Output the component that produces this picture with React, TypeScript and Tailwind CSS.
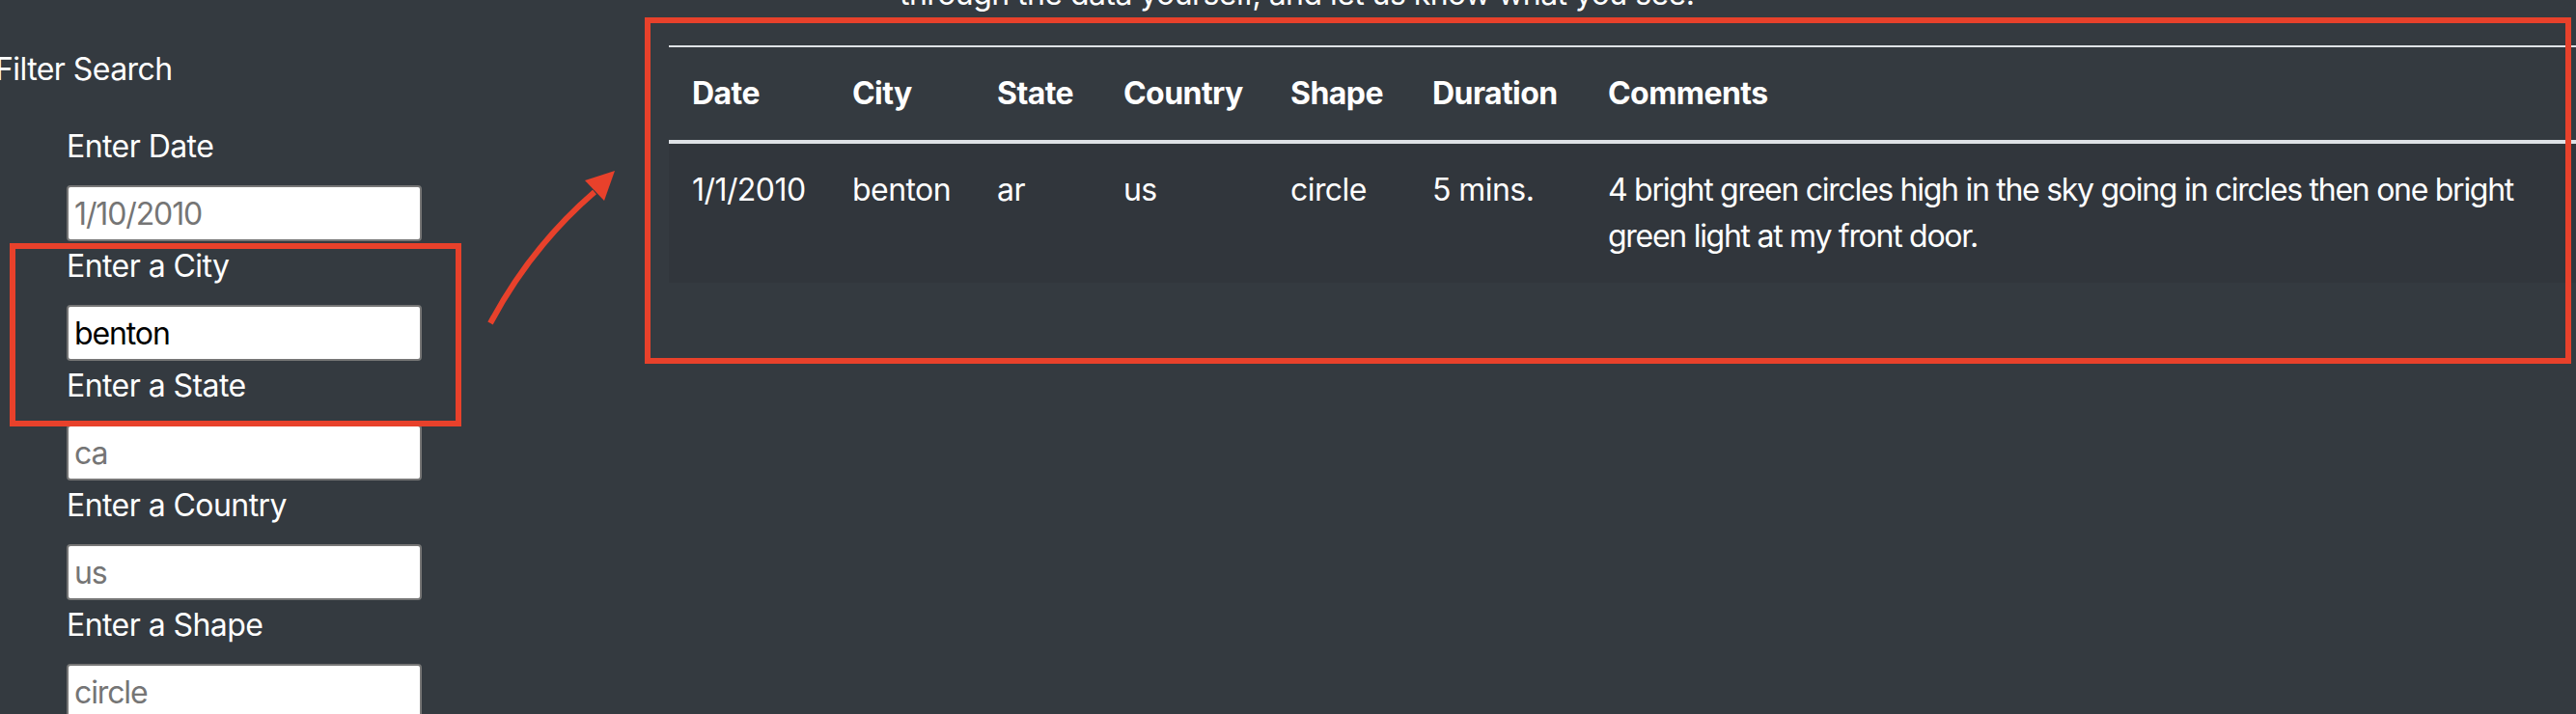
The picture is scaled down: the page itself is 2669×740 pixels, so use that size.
import React from "react";

const groups = [
  { label: "Enter Date", value: "", placeholder: "1/10/2010" },
  { label: "Enter a City", value: "benton", placeholder: "" },
  { label: "Enter a State", value: "", placeholder: "ca" },
  { label: "Enter a Country", value: "", placeholder: "us" },
  { label: "Enter a Shape", value: "", placeholder: "circle" },
];

export default function App() {
  return (
    <div className="relative flex h-[740px] w-[2669px] overflow-hidden bg-[#343a40] font-['Inter',sans-serif] tracking-[-0.035em] text-white">
      <aside className="w-[693px] shrink-0 pt-[48px]">
        <h5 className="-ml-[5px] text-[32px] leading-[48px] font-normal">Filter Search</h5>
        <div className="mt-[32px] flex flex-col pl-[69px]">
          {groups.map((g) => (
            <div key={g.label} className="flex flex-col">
              <label className="mb-[16px] text-[32px] leading-[48px]">{g.label}</label>
              <input
                readOnly
                value={g.value}
                placeholder={g.placeholder}
                className="mb-[2px] h-[58px] w-[368px] rounded-[4px] border-2 border-[#767676] bg-white pl-[6px] font-['Inter',sans-serif] text-[32px] tracking-[-0.035em] text-black outline-none placeholder:text-[#757575]"
              />
            </div>
          ))}
        </div>
      </aside>

      <main className="min-w-0 flex-1">
        <p className="-mt-[30px] whitespace-nowrap pl-[239px] text-[32px] leading-[48px]">
          through the data yourself, and let us know what you see.
        </p>
        <table className="mt-[29px] w-[2000px] table-fixed border-collapse text-left text-[32px] leading-[48px]">
          <thead>
            <tr>
              <th className="w-[166px] border-t-2 border-b-4 border-[#dee2e6] p-[24px] font-bold">Date</th>
              <th className="w-[150px] border-t-2 border-b-4 border-[#dee2e6] p-[24px] font-bold">City</th>
              <th className="w-[131px] border-t-2 border-b-4 border-[#dee2e6] p-[24px] font-bold">State</th>
              <th className="w-[173px] border-t-2 border-b-4 border-[#dee2e6] p-[24px] font-bold">Country</th>
              <th className="w-[147px] border-t-2 border-b-4 border-[#dee2e6] p-[24px] font-bold">Shape</th>
              <th className="w-[182px] border-t-2 border-b-4 border-[#dee2e6] p-[24px] font-bold">Duration</th>
              <th className="border-t-2 border-b-4 border-[#dee2e6] p-[24px] font-bold">Comments</th>
            </tr>
          </thead>
          <tbody>
            <tr className="bg-[#31363c] align-top">
              <td className="p-[24px]">1/1/2010</td>
              <td className="p-[24px]">benton</td>
              <td className="p-[24px]">ar</td>
              <td className="p-[24px]">us</td>
              <td className="p-[24px]">circle</td>
              <td className="p-[24px]">5 mins.</td>
              <td className="p-[24px] tracking-[-0.04em]">
                4 bright green circles high in the sky going in circles then one bright green light at my front door.
              </td>
            </tr>
          </tbody>
        </table>
      </main>

      {/* annotation overlays */}
      <div className="pointer-events-none absolute left-[10px] top-[252px] h-[190px] w-[468px] border-[6px] border-[#e8412b]" />
      <div className="pointer-events-none absolute left-[668px] top-[18px] h-[359px] w-[1996px] border-[6px] border-[#e8412b]" />
      <svg className="pointer-events-none absolute left-0 top-0" width="700" height="400" viewBox="0 0 700 400">
        <path d="M508 335 Q550 256 616 199" fill="none" stroke="#e8412b" strokeWidth="6" />
        <polygon points="637,177 606,187 626,208" fill="#e8412b" />
      </svg>
    </div>
  );
}
